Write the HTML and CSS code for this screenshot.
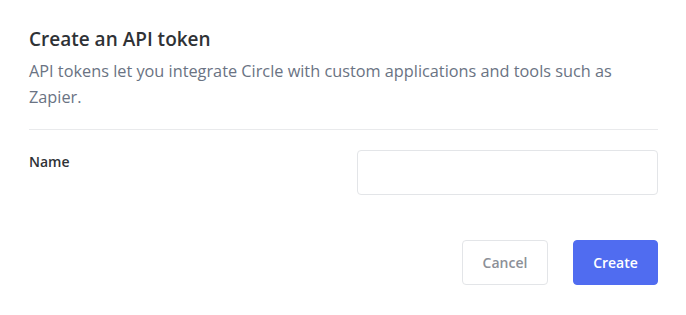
FILE: index.html
```html
<!DOCTYPE html>
<html>
<head>
<meta charset="utf-8">
<link rel="stylesheet" href="styles.css">
</head>
<body>
<div class="modal">
  <div class="header">
    <h2 class="title">Create an API token</h2>
    <p class="desc">API tokens let you integrate Circle with custom applications and tools such as Zapier.</p>
  </div>
  <div class="form-row">
    <label class="label" for="name">Name</label>
    <input class="input" id="name" type="text">
  </div>
  <div class="actions">
    <button class="btn btn-cancel">Cancel</button>
    <button class="btn btn-create">Create</button>
  </div>
</div>
</body>
</html>
```
FILE: styles.css
```css
* { box-sizing: border-box; }
html, body { margin: 0; padding: 0; background: #ffffff; }
body {
  font-family: "Open Sans", "Noto Sans", sans-serif;
  width: 686px;
  height: 315px;
  overflow: hidden;
}
.modal {
  padding: 26px 28px 0 29px;
}
.header {
  padding-bottom: 19px;
  border-bottom: 1px solid #e9eaec;
}
.title {
  margin: 0;
  font-size: 19px;
  line-height: 26px;
  font-weight: 600;
  color: #2f3236;
}
.desc {
  margin: 6px 0 0;
  font-size: 16.3px;
  line-height: 26px;
  color: #6a7383;
}
.form-row {
  display: flex;
  justify-content: space-between;
  align-items: flex-start;
  margin-top: 20px;
}
.label {
  font-size: 14px;
  font-weight: 600;
  color: #2f3236;
  line-height: 22px;
  margin-top: 1px;
}
.input {
  width: 301px;
  height: 45px;
  border: 1px solid #e3e5e8;
  border-radius: 4px;
  background: #fff;
  outline: none;
}
.actions {
  display: flex;
  justify-content: flex-end;
  gap: 25px;
  margin-top: 45px;
}
.btn {
  height: 45px;
  border-radius: 4px;
  font-family: inherit;
  font-size: 14px;
  font-weight: 600;
  padding: 0;
  cursor: pointer;
}
.btn-cancel {
  width: 86px;
  background: #fff;
  border: 1px solid #e3e5e8;
  color: #8c9097;
}
.btn-create {
  width: 85px;
  background: #506cf0;
  border: 1px solid #506cf0;
  color: #ffffff;
}
```
